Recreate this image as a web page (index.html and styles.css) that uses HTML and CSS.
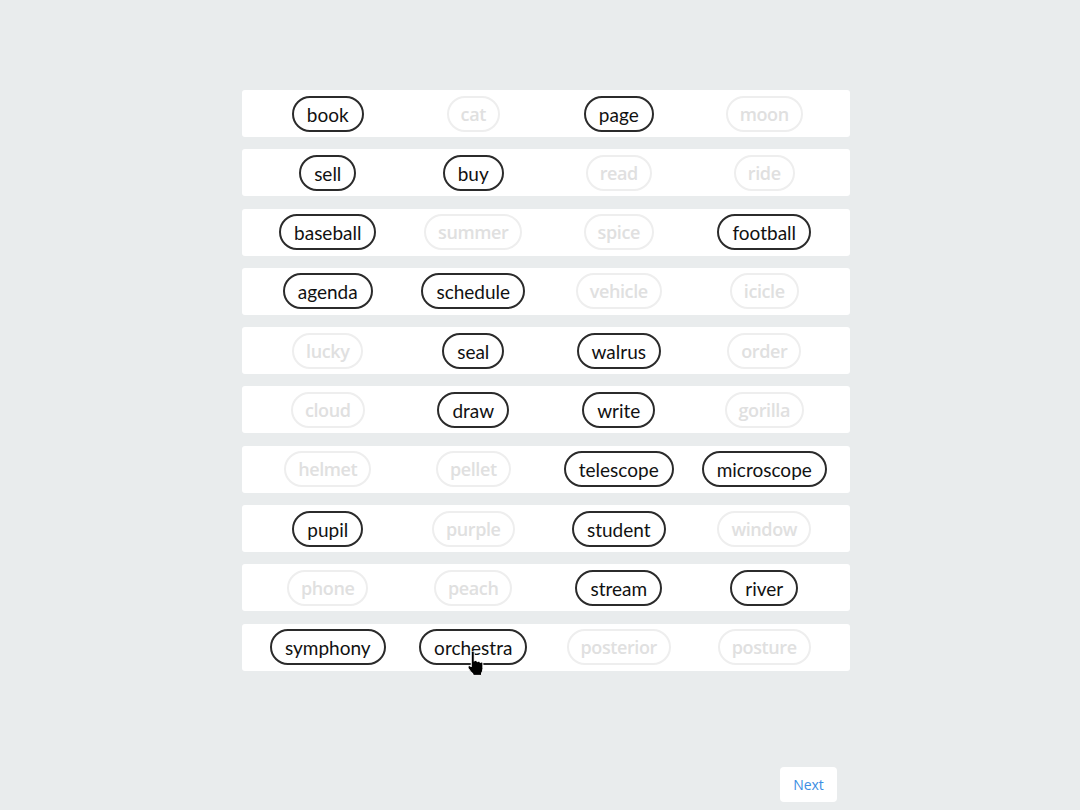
FILE: index.html
```html
<!DOCTYPE html>
<html lang="en">
<head>
  <meta charset="UTF-8">
  <title>Word pairs</title>
  <link rel="stylesheet" href="styles.css">
</head>
<body>
  <div class="board">
    <div class="row">
      <div class="cell"><span class="word">book</span></div>
      <div class="cell"><span class="word off">cat</span></div>
      <div class="cell"><span class="word">page</span></div>
      <div class="cell"><span class="word off">moon</span></div>
    </div>
    <div class="row">
      <div class="cell"><span class="word">sell</span></div>
      <div class="cell"><span class="word">buy</span></div>
      <div class="cell"><span class="word off">read</span></div>
      <div class="cell"><span class="word off">ride</span></div>
    </div>
    <div class="row">
      <div class="cell"><span class="word">baseball</span></div>
      <div class="cell"><span class="word off">summer</span></div>
      <div class="cell"><span class="word off">spice</span></div>
      <div class="cell"><span class="word">football</span></div>
    </div>
    <div class="row">
      <div class="cell"><span class="word">agenda</span></div>
      <div class="cell"><span class="word">schedule</span></div>
      <div class="cell"><span class="word off">vehicle</span></div>
      <div class="cell"><span class="word off">icicle</span></div>
    </div>
    <div class="row">
      <div class="cell"><span class="word off">lucky</span></div>
      <div class="cell"><span class="word">seal</span></div>
      <div class="cell"><span class="word">walrus</span></div>
      <div class="cell"><span class="word off">order</span></div>
    </div>
    <div class="row">
      <div class="cell"><span class="word off">cloud</span></div>
      <div class="cell"><span class="word">draw</span></div>
      <div class="cell"><span class="word">write</span></div>
      <div class="cell"><span class="word off">gorilla</span></div>
    </div>
    <div class="row">
      <div class="cell"><span class="word off">helmet</span></div>
      <div class="cell"><span class="word off">pellet</span></div>
      <div class="cell"><span class="word">telescope</span></div>
      <div class="cell"><span class="word">microscope</span></div>
    </div>
    <div class="row">
      <div class="cell"><span class="word">pupil</span></div>
      <div class="cell"><span class="word off">purple</span></div>
      <div class="cell"><span class="word">student</span></div>
      <div class="cell"><span class="word off">window</span></div>
    </div>
    <div class="row">
      <div class="cell"><span class="word off">phone</span></div>
      <div class="cell"><span class="word off">peach</span></div>
      <div class="cell"><span class="word">stream</span></div>
      <div class="cell"><span class="word">river</span></div>
    </div>
    <div class="row">
      <div class="cell"><span class="word">symphony</span></div>
      <div class="cell">
        <span class="word">orchestra
          <svg class="cursor" width="18" height="25" viewBox="0 0 14 20">
            <path d="M3.2 1.4c0-.8.6-1.3 1.2-1.3s1.2.5 1.2 1.3V8.2c.3-.5.8-.8 1.3-.7.7.1 1.1.6 1.1 1.2.3-.4.8-.6 1.3-.5.6.1 1 .6 1 1.1.3-.3.8-.5 1.200-.4.6.2 1 .7 1 1.2v4c0 1.5-.4 2.6-1 3.5V19.5H4.6v-1.3C3.2 17.2 2 15.7 1.1 14.1.6 13.3.5 12.6.9 12.1c.5-.5 1.3-.4 1.8.1l.5.5z" fill="#000" stroke="#fff" stroke-width="0.8"/>
          </svg>
        </span>
      </div>
      <div class="cell"><span class="word off">posterior</span></div>
      <div class="cell"><span class="word off">posture</span></div>
    </div>
  </div>

  <div class="footer">
    <button class="next">Next</button>
  </div>
</body>
</html>
```

FILE: styles.css
```css
body {
  margin: 0;
  padding: 0;
  background-color: #e9eced;
  font-family: "Open Sans", "Liberation Sans", sans-serif;
  width: 1080px;
  height: 810px;
  overflow: hidden;
}
.board {
  width: 608px;
  margin: 90px 0 0 242px;
  display: flex;
  flex-direction: column;
  gap: 12.3px;
}
.row {
  height: 47px;
  background-color: #fff;
  border-radius: 3px;
  padding: 0 13px;
  display: grid;
  grid-template-columns: repeat(4, 1fr);
  align-items: center;
}
.cell {
  display: flex;
  justify-content: center;
}
.word {
  position: relative;
  display: inline-block;
  height: 32px;
  line-height: 33px;
  padding: 0 13px;
  border: 2px solid #2b2b2b;
  border-radius: 18px;
  font-family: Lato, "Open Sans", sans-serif;
  font-size: 19px;
  color: #111;
}
.word.off {
  padding: 0 12px;
  border-color: #eeeeee;
  color: #e0e0e0;
  font-family: "Open Sans", "Liberation Sans", sans-serif;
  font-size: 18px;
  font-weight: 600;
  letter-spacing: -0.4px;
}
.cursor {
  position: absolute;
  left: 46px;
  top: 20px;
}
.footer {
  display: flex;
  justify-content: flex-end;
  padding-right: 243px;
  margin-top: 96px;
}
.next {
  width: 57px;
  height: 35px;
  background-color: #fff;
  border: none;
  border-radius: 4px;
  color: #3c8ee3;
  font-family: "Open Sans", "Liberation Sans", sans-serif;
  font-size: 14px;
  padding: 0;
}
```
